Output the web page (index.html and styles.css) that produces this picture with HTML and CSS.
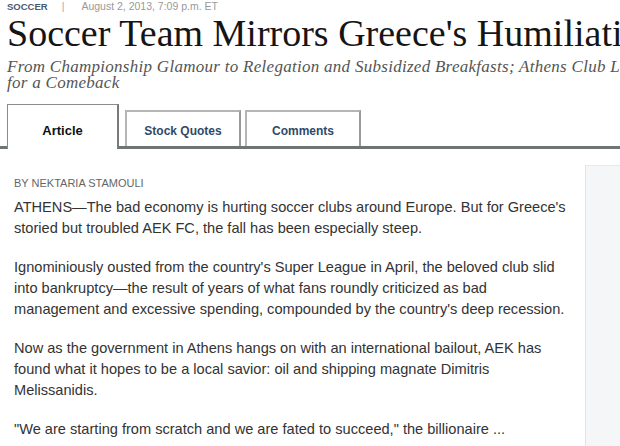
FILE: index.html
```html
<!DOCTYPE html>
<html>
<head>
<meta charset="utf-8">
<link rel="stylesheet" href="styles.css">
</head>
<body>
<div class="kicker"><span class="section">SOCCER</span><span class="sep">|</span><span class="date">August 2, 2013, 7:09 p.m. ET</span></div>
<h1 class="headline">Soccer Team Mirrors Greece's Humiliation</h1>
<h2 class="deck">From Championship Glamour to Relegation and Subsidized Breakfasts; Athens Club Looks to Oil Tycoon<br>for a Comeback</h2>
<div class="tabs">
  <div class="tab active">Article</div>
  <div class="tab tab-sq">Stock Quotes</div>
  <div class="tab tab-cm">Comments</div>
</div>
<div class="main">
  <div class="article">
    <div class="byline">BY NEKTARIA STAMOULI</div>
    <p>ATHENS—The bad economy is hurting soccer clubs around Europe. But for Greece's storied but troubled AEK FC, the fall has been especially steep.</p>
    <p>Ignominiously ousted from the country's Super League in April, the beloved club slid into bankruptcy—the result of years of what fans roundly criticized as bad management and excessive spending, compounded by the country's deep recession.</p>
    <p>Now as the government in Athens hangs on with an international bailout, AEK has found what it hopes to be a local savior: oil and shipping magnate Dimitris Melissanidis.</p>
    <p>"We are starting from scratch and we are fated to succeed," the billionaire ...</p>
  </div>
  <div class="aside"></div>
</div>
</body>
</html>
```

FILE: styles.css
```css
html, body {
  margin: 0;
  padding: 0;
  background: #fff;
  overflow: hidden;
}
body {
  width: 620px;
  height: 446px;
  font-family: "Liberation Sans", Arial, sans-serif;
  color: #333;
}
.kicker {
  padding: 0 7px;
  height: 12px;
  font-size: 10.5px;
  line-height: 12px;
  white-space: nowrap;
}
.section {
  color: #4c5a6e;
  font-weight: bold;
  font-size: 9.5px;
}
.sep {
  color: #aaa;
  margin: 0 17px 0 14px;
}
.date {
  color: #999;
}
.headline {
  margin: 0;
  padding: 0 0 0 7px;
  font-family: "Liberation Serif", "Times New Roman", serif;
  font-weight: normal;
  font-size: 38px;
  line-height: 42px;
  color: #151515;
  white-space: nowrap;
}
.deck {
  margin: 0;
  padding: 5px 0 0 7px;
  font-family: "Liberation Serif", "Times New Roman", serif;
  font-style: italic;
  font-weight: normal;
  font-size: 17px;
  letter-spacing: 0.28px;
  line-height: 16px;
  color: #555;
  white-space: nowrap;
}
.tabs {
  display: flex;
  align-items: flex-end;
  height: 40px;
  margin-top: 15px;
  padding-left: 7px;
  border-bottom: 3px solid #6f7575;
}
.tab {
  box-sizing: border-box;
  display: flex;
  align-items: center;
  justify-content: center;
  font-weight: bold;
  font-size: 12px;
  color: #2f4a68;
  background: #fff;
  height: 36px;
  width: 116px;
  border: 2px solid #b5b5b5;
  border-right-color: #9a9a9a;
  border-bottom: 0;
  padding-top: 4px;
}
.tab.active {
  width: 112px;
  height: 45px;
  margin-bottom: -3px;
  border: 1px solid #8c8c8c;
  border-right: 2px solid #7a7a7a;
  border-bottom: 0;
  font-size: 13px;
  color: #111;
  padding-top: 6px;
}
.tab-sq {
  margin-left: 6px;
}
.tab-cm {
  margin-left: 4px;
}
.main {
  display: flex;
  padding-left: 14px;
}
.article {
  width: 558px;
  flex: none;
  padding-top: 28px;
}
.byline {
  font-size: 11px;
  line-height: 13px;
  color: #666;
  margin-bottom: 7px;
}
.article p {
  margin: 0 0 18px;
  font-size: 14.6px;
  line-height: 21px;
  color: #333;
}
.aside {
  flex: none;
  width: 60px;
  height: 300px;
  margin-top: 16px;
  margin-left: 13px;
  background: #f5f6f8;
  border-left: 1px solid #e2e3e6;
  border-top: 1px solid #e8e9eb;
}
```
